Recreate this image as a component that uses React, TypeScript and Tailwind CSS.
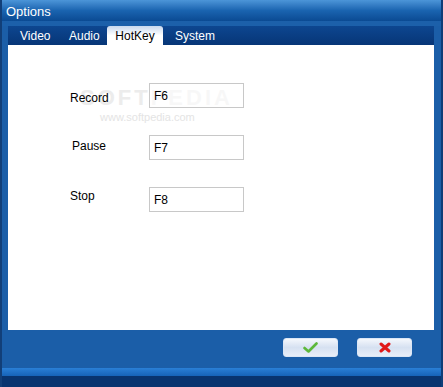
import React from "react";

const font = { fontFamily: '"Liberation Sans", Arial, sans-serif' };

export default function App() {
  return (
    <div className="w-[443px] h-[387px] overflow-hidden flex" style={font}>
      <div className="w-[2px] h-full bg-[#123f78]" />
      <div className="flex-1 flex flex-col bg-[#1b5ea8]">
        <div className="h-[21px] flex items-center pl-[4px] pt-[2px] text-white text-[13px] bg-gradient-to-b from-[#4c95d8] via-[#1a64b0] to-[#0b4a93]">
          Options
        </div>
        <div className="h-[5px] bg-[#1c60aa]" />
        <div className="flex-1 flex flex-col pl-[6px] pr-[7px]">
          <div className="h-[19px] flex items-end bg-gradient-to-b from-[#0d4690] to-[#073677] text-white text-[12px]">
            <div className="w-[12px]" />
            <div className="w-[49px] h-full flex items-center">Video</div>
            <div className="w-[38px] h-full flex items-center">Audio</div>
            <div className="w-[56px] h-[19px] flex items-center justify-center text-black bg-gradient-to-b from-[#c9d9ee] via-[#ffffff] to-[#ffffff] rounded-t-[3px]">
              HotKey
            </div>
            <div className="w-[12px]" />
            <div className="h-full flex items-center">System</div>
          </div>
          <div className="h-[285px] bg-white relative text-[12px] text-black">
            <div className="absolute left-[72px] top-[36px] text-[22px] tracking-[3px] text-[#ececec] font-bold select-none">
              SOFTPEDIA
            </div>
            <div className="absolute left-[92px] top-[64px] text-[11px] text-[#e4e4e4] select-none">
              www.softpedia.com
            </div>
            <div className="relative flex flex-col pt-[38px]">
              <div className="flex items-center h-[25px]">
                <div className="w-[141px] pl-[62px] relative top-[2px]">Record</div>
                <div className="w-[95px] h-[25px] border border-[#c8c8c8] bg-white/60 flex items-center pl-[4px]">F6</div>
              </div>
              <div className="flex items-center h-[25px] mt-[27px]">
                <div className="w-[141px] pl-[64px] relative top-[-2px]">Pause</div>
                <div className="w-[95px] h-[25px] border border-[#c8c8c8] flex items-center pl-[4px]">F7</div>
              </div>
              <div className="flex items-center h-[25px] mt-[27px]">
                <div className="w-[141px] pl-[62px] relative top-[-4px]">Stop</div>
                <div className="w-[95px] h-[25px] border border-[#c8c8c8] flex items-center pl-[4px]">F8</div>
              </div>
            </div>
          </div>
          <div className="flex-1 flex justify-end items-start pt-[8px] pr-[22px] gap-[19px]">
            <div className="w-[55px] h-[19px] rounded-[3px] border border-[#dbe6f5] bg-gradient-to-b from-[#f4f7fc] via-[#d6e1f1] to-[#e8eef8] flex items-center justify-center">
              <svg width="15" height="11" viewBox="0 0 15 11">
                <path d="M1.5 6 L5.5 9.5 L13.5 1.5" fill="none" stroke="#5cb83a" strokeWidth="2.6" strokeLinecap="round" strokeLinejoin="round" />
              </svg>
            </div>
            <div className="w-[55px] h-[19px] rounded-[3px] border border-[#dbe6f5] bg-gradient-to-b from-[#f4f7fc] via-[#d6e1f1] to-[#e8eef8] flex items-center justify-center">
              <svg width="12" height="11" viewBox="0 0 12 11">
                <path d="M2 2 L10 9 M10 2 L2 9" fill="none" stroke="#e01818" strokeWidth="3" strokeLinecap="round" />
              </svg>
            </div>
          </div>
        </div>
        <div className="h-[8px] bg-gradient-to-b from-[#2a7fd6] to-[#1663b8]" />
        <div className="h-[11px] bg-[#08346f]" />
      </div>
      <div className="w-[2px] h-full bg-[#0e3d78]" />
    </div>
  );
}
